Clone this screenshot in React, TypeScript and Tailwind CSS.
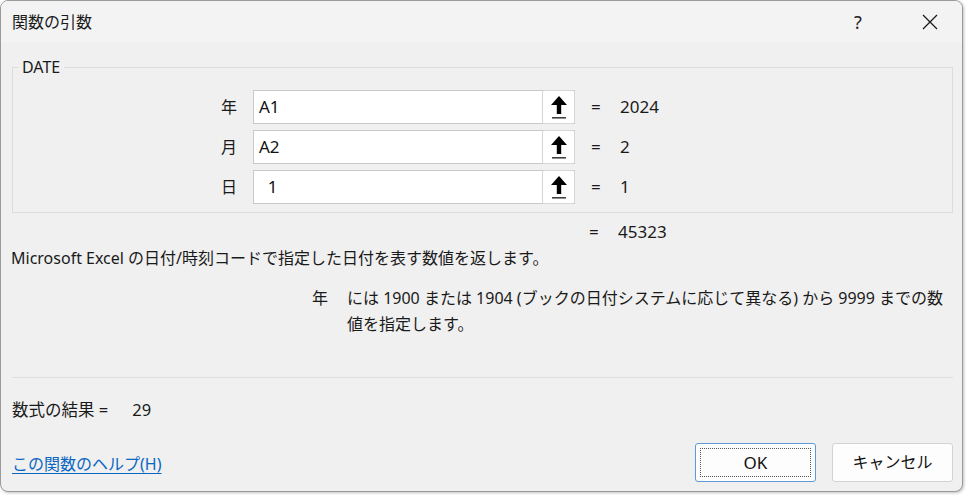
import React from "react";

const font = { fontFamily: '"Noto Sans", "Noto Sans CJK JP", sans-serif' };

function RefIcon() {
  return (
    <svg width="18" height="26" viewBox="0 0 18 26">
      <path d="M9 2 L17 11 L11.2 11 L11.2 20 L6.8 20 L6.8 11 L1 11 Z" fill="#000" />
      <rect x="2" y="23" width="14" height="1.6" fill="#444" />
    </svg>
  );
}

function ArgRow({ label, value, result }: { label: string; value: string; result: string }) {
  return (
    <div className="flex items-center h-[34px]">
      <div className="w-[240px] flex justify-end pr-[16px] text-[16px] text-[#1a1a1a]">{label}</div>
      <div className="w-[322px] h-[34px] flex bg-white border border-[#c9c9c9]">
        <div className="flex-1 flex items-center pl-[5px] text-[17px] text-[#111] whitespace-pre">{value}</div>
        <div className="w-[33px] border border-[#d6d6d6] rounded-[2px] bg-white flex items-center justify-center -my-px -mr-px h-[34px]">
          <RefIcon />
        </div>
      </div>
      <div className="pl-[16px] text-[17px] text-[#1a1a1a] flex">
        <span className="w-[29px]">=</span>
        <span>{result}</span>
      </div>
    </div>
  );
}

export default function App() {
  return (
    <div className="w-[966px] h-[495px] bg-white relative overflow-hidden" style={font}>
      <div className="w-[963px] h-[492px] rounded-[8px] border border-[#9a9a9a] bg-[#f0f0f0] overflow-hidden flex flex-col shadow-[1px_1px_3px_rgba(0,0,0,0.25)]">
        {/* Title bar */}
        <div className="h-[42px] bg-[#f3f3f3] flex items-center pl-[11px] shrink-0">
          <div className="text-[16px] text-[#1a1a1a] flex-1">関数の引数</div>
          <div className="w-[40px] text-center text-[18px] text-[#222] mr-[32px]">?</div>
          <div className="w-[40px] flex justify-center mr-[12px]">
            <svg width="16" height="16" viewBox="0 0 16 16">
              <path d="M1 1 L15 15 M15 1 L1 15" stroke="#1a1a1a" strokeWidth="1.3" />
            </svg>
          </div>
        </div>
        {/* Body */}
        <div className="flex-1 flex flex-col pl-[11px] pr-[9px]">
          {/* Group */}
          <div className="relative mt-[24px] h-[146px] border border-[#dcdcdc] pt-[22px]">
            <div className="absolute left-[5px] -top-[13px] bg-[#f0f0f0] px-[4px] text-[16px] text-[#1a1a1a]">DATE</div>
            <div className="flex flex-col gap-[6px]">
              <ArgRow label="年" value="A1" result="2024" />
              <ArgRow label="月" value="A2" result="2" />
              <ArgRow label="日" value="  1" result="1" />
            </div>
          </div>
          <div className="h-[34px] flex items-center pt-[4px] pl-[577px] text-[17px] text-[#1a1a1a]">
            <span className="w-[29px]">=</span>
            <span>45323</span>
          </div>
          <div className="text-[16px] text-[#1a1a1a] leading-[22px] -ml-px">
            Microsoft Excel の日付/時刻コードで指定した日付を表す数値を返します。
          </div>
          <div className="flex mt-[16px] text-[16px] text-[#1a1a1a] leading-[26px]">
            <div className="w-[335px] text-right pr-[19px]">年</div>
            <div>
              <div>には 1900 または 1904 (ブックの日付システムに応じて異なる) から 9999 までの数</div>
              <div>値を指定します。</div>
            </div>
          </div>
          <div className="mt-[40px] border-t border-[#dedede]" />
          <div className="mt-[20px] text-[16.5px] text-[#1a1a1a] flex">
            <span>数式の結果 =</span>
            <span className="ml-[24px]">29</span>
          </div>
          <div className="flex items-end justify-between mt-[20px]">
            <a className="text-[16px] text-[#0a66c2] underline underline-offset-[3px] mb-[6px]">この関数のヘルプ(H)</a>
            <div className="flex gap-[16px]">
              <button className="w-[121px] h-[39px] bg-[#fdfdfd] border border-[#5a9ad8] rounded-[3px] p-[4px]">
                <div className="w-full h-full border border-dotted border-[#555] flex items-center justify-center text-[17px] text-[#111]">OK</div>
              </button>
              <button className="w-[121px] h-[39px] bg-[#fdfdfd] border border-[#d3d3d3] rounded-[3px] flex items-center justify-center text-[16px] text-[#111]">キャンセル</button>
            </div>
          </div>
        </div>
      </div>
    </div>
  );
}
